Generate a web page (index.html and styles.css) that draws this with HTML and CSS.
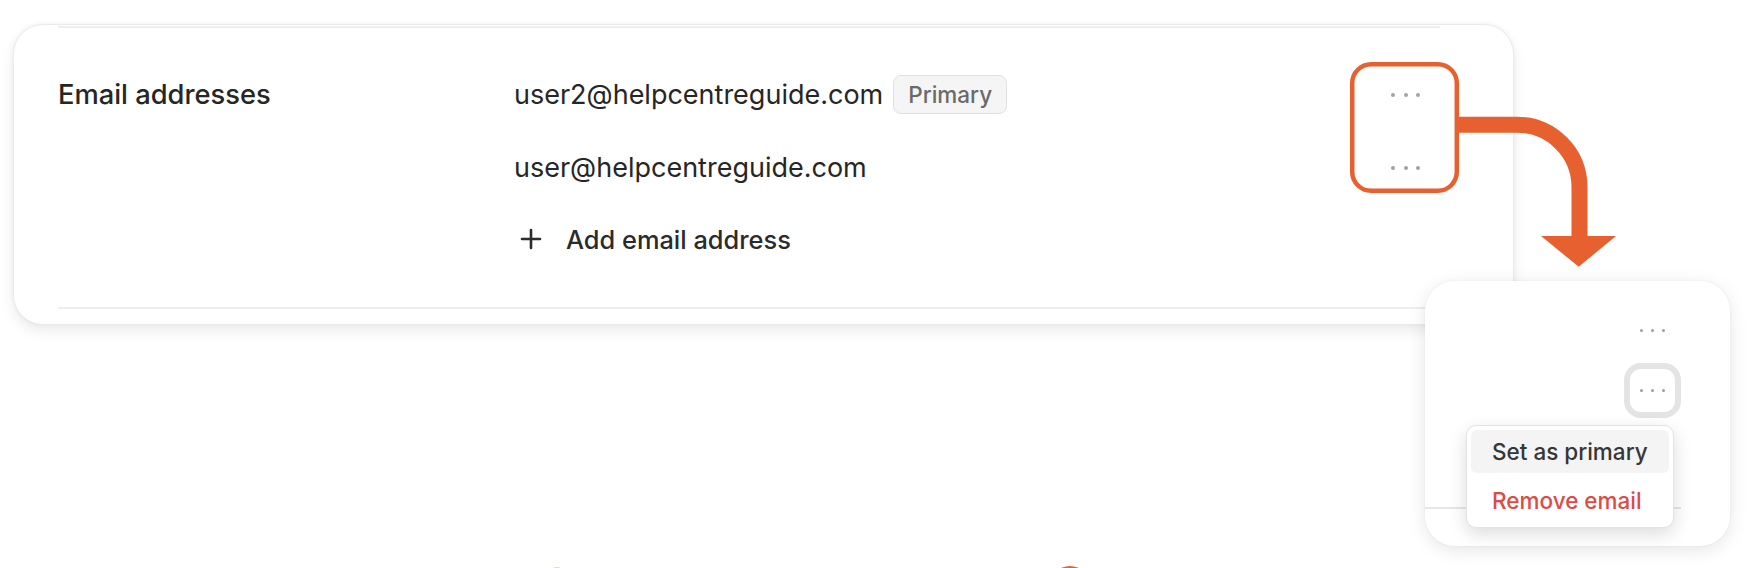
FILE: index.html
```html
<!DOCTYPE html>
<html lang="en">
<head>
<meta charset="utf-8">
<title>Email addresses</title>
<link rel="stylesheet" href="styles.css">
</head>
<body>
<div class="canvas">
  <section class="card">
    <div class="rule"></div>
    <div class="setting">
      <div class="label">Email addresses</div>
      <div class="values">
        <div class="row row-1"><span class="email">user2@helpcentreguide.com</span><span class="badge">Primary</span></div>
        <div class="row row-2"><span class="email">user@helpcentreguide.com</span></div>
        <div class="row row-3 add">
          <svg class="plus" width="22" height="22" viewBox="0 0 22 22"><path d="M11 2v18M2 11h18" stroke="#2b2b2b" stroke-width="2.6" stroke-linecap="round" fill="none"/></svg>
          <span>Add email address</span>
        </div>
      </div>
      <div class="actions">
        <div class="action row-1"><span class="dots"><i></i><i></i><i></i></span></div>
        <div class="action row-2"><span class="dots"><i></i><i></i><i></i></span></div>
      </div>
    </div>
    <div class="rule"></div>
  </section>

  <svg class="annotations" width="1756" height="568" viewBox="0 0 1756 568">
    <rect x="1352.2" y="64.2" width="104.6" height="126.6" rx="19" ry="19" fill="none" stroke="#E6612F" stroke-width="4.5"/>
    <path d="M1458 124.7 H1517 A62.5 62.5 0 0 1 1579.5 187.2 V240" fill="none" stroke="#E6612F" stroke-width="16"/>
    <polygon points="1541,236 1616,236 1578.7,266.8" fill="#E6612F"/>
    <circle cx="1070" cy="586" r="20" fill="#E6612F"/>
    <circle cx="557" cy="575" r="8" fill="#F6CDBE"/>
  </svg>

  <div class="zoom-panel">
    <div class="zp-col">
      <div class="zp-slot"><span class="dots small"><i></i><i></i><i></i></span></div>
      <div class="zp-button"><span class="dots small"><i></i><i></i><i></i></span></div>
      <div class="zp-rule"></div>
    </div>
    <div class="menu">
      <div class="menu-item active">Set as primary</div>
      <div class="menu-item danger">Remove email</div>
    </div>
  </div>
</div>
</body>
</html>
```

FILE: styles.css
```css
* { box-sizing: border-box; }

html, body {
  margin: 0;
  padding: 0;
  background: #ffffff;
}

body {
  font-family: "Inter", "Noto Sans", "Liberation Sans", sans-serif;
  color: #2b2b2b;
}

.canvas {
  position: relative;
  width: 1756px;
  height: 568px;
  overflow: hidden;
  background: #ffffff;
  padding-top: 24px;
  padding-left: 13px;
}

/* main card */
.card {
  width: 1501px;
  height: 301px;
  background: #ffffff;
  border: 1px solid #ebebeb;
  border-radius: 30px;
  box-shadow: 0 6px 14px rgba(0, 0, 0, 0.08), 0 0 4px rgba(0, 0, 0, 0.05);
  padding: 1px 73px 0 44px;
}

.rule {
  height: 2px;
  background: #eeeeee;
}

.setting {
  display: flex;
  padding: 30px 0 33px 0;
}

.label {
  width: 456px;
  height: 73px;
  display: flex;
  align-items: center;
  font-size: 27.3px;
  font-weight: 500;
  color: #262626;
}

.values {
  flex: 1;
  display: flex;
  flex-direction: column;
}

.row {
  display: flex;
  align-items: center;
  height: 73px;
}

.row-3 { height: 70px; }

.email {
  font-size: 27px;
  font-weight: 400;
  color: #262626;
}

.badge {
  margin-left: 10px;
  height: 39px;
  padding: 0 14px;
  display: inline-flex;
  align-items: center;
  background: #f5f5f5;
  border: 1.5px solid #e1e1e1;
  border-radius: 8px;
  font-size: 22.5px;
  font-weight: 500;
  color: #6a6a6a;
}

.add {
  padding-left: 6px;
  gap: 24px;
  font-size: 25.4px;
  font-weight: 500;
  color: #2b2b2b;
}

.plus { display: block; }

.actions {
  width: 69px;
  display: flex;
  flex-direction: column;
}

.action {
  height: 73px;
  display: flex;
  align-items: center;
  justify-content: center;
}

.dots {
  display: inline-flex;
  gap: 8.5px;
}

.dots i {
  display: block;
  width: 4px;
  height: 4px;
  border-radius: 50%;
  background: #a3a3a3;
}

.dots.small { gap: 8px; }
.dots.small i { width: 3.2px; height: 3.2px; background: #9e9e9e; }

/* annotation overlay */
.annotations {
  position: absolute;
  left: 0;
  top: 0;
  pointer-events: none;
}

/* zoomed callout panel */
.zoom-panel {
  position: absolute;
  left: 1425px;
  top: 281px;
  width: 305px;
  height: 265px;
  background: #ffffff;
  border-radius: 30px;
  box-shadow: 0 4px 18px rgba(0, 0, 0, 0.10), 0 0 3px rgba(0, 0, 0, 0.05);
}

.zp-col {
  display: flex;
  flex-direction: column;
  padding: 22px 49px 0 0;
}

.zp-slot {
  align-self: flex-end;
  width: 57px;
  height: 55px;
  display: flex;
  align-items: center;
  justify-content: center;
}

.zp-button {
  align-self: flex-end;
  margin-top: 5px;
  width: 57px;
  height: 55px;
  border: 6px solid #e4e4e4;
  border-radius: 17px;
  display: flex;
  align-items: center;
  justify-content: center;
}

.zp-rule {
  margin-top: 89px;
  height: 1.5px;
  background: #e6e6e6;
}

.menu {
  position: absolute;
  left: 41px;
  top: 144px;
  width: 208px;
  height: 103px;
  background: #ffffff;
  border: 1px solid #e3e3e3;
  border-radius: 10px;
  box-shadow: 0 6px 18px rgba(0, 0, 0, 0.14);
  padding: 4px;
  display: flex;
  flex-direction: column;
}

.menu-item {
  height: 45px;
  display: flex;
  align-items: center;
  padding-left: 21px;
  border-radius: 6px;
  font-size: 22.5px;
  font-weight: 500;
  color: #363636;
}

.menu-item.active { background: #f4f4f4; }

.menu-item.danger {
  height: 52px;
  padding-top: 5px;
  color: #e04a45;
}
```
